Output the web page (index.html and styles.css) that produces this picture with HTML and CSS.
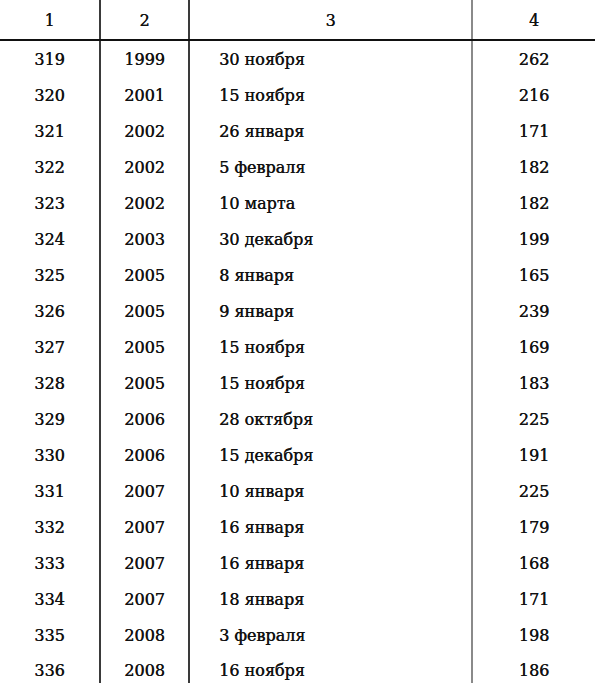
FILE: index.html
```html
<!DOCTYPE html>
<html lang="ru">
<head>
<meta charset="utf-8">
<title>Таблица</title>
<link rel="stylesheet" href="styles.css">
</head>
<body>
<table class="data">
  <colgroup>
    <col class="c1"><col class="c2"><col class="c3"><col class="c4">
  </colgroup>
  <thead>
    <tr><th>1</th><th>2</th><th>3</th><th>4</th></tr>
  </thead>
  <tbody>
    <tr><td>319</td><td>1999</td><td>30 ноября</td><td>262</td></tr>
    <tr><td>320</td><td>2001</td><td>15 ноября</td><td>216</td></tr>
    <tr><td>321</td><td>2002</td><td>26 января</td><td>171</td></tr>
    <tr><td>322</td><td>2002</td><td>5 февраля</td><td>182</td></tr>
    <tr><td>323</td><td>2002</td><td>10 марта</td><td>182</td></tr>
    <tr><td>324</td><td>2003</td><td>30 декабря</td><td>199</td></tr>
    <tr><td>325</td><td>2005</td><td>8 января</td><td>165</td></tr>
    <tr><td>326</td><td>2005</td><td>9 января</td><td>239</td></tr>
    <tr><td>327</td><td>2005</td><td>15 ноября</td><td>169</td></tr>
    <tr><td>328</td><td>2005</td><td>15 ноября</td><td>183</td></tr>
    <tr><td>329</td><td>2006</td><td>28 октября</td><td>225</td></tr>
    <tr><td>330</td><td>2006</td><td>15 декабря</td><td>191</td></tr>
    <tr><td>331</td><td>2007</td><td>10 января</td><td>225</td></tr>
    <tr><td>332</td><td>2007</td><td>16 января</td><td>179</td></tr>
    <tr><td>333</td><td>2007</td><td>16 января</td><td>168</td></tr>
    <tr><td>334</td><td>2007</td><td>18 января</td><td>171</td></tr>
    <tr><td>335</td><td>2008</td><td>3 февраля</td><td>198</td></tr>
    <tr class="last"><td>336</td><td>2008</td><td>16 ноября</td><td>186</td></tr>
  </tbody>
</table>
</body>
</html>
```
FILE: styles.css
```css
html, body {
  margin: 0;
  padding: 0;
  background: #fff;
  overflow: hidden;
}
body {
  width: 595px;
  height: 687px;
}
.data {
  width: 595px;
  border-collapse: collapse;
  table-layout: fixed;
  font-family: "DejaVu Serif", "Liberation Serif", serif;
  color: #111;
  text-shadow: 0.4px 0 0 #222;
}
.c1 { width: 100px; }
.c2 { width: 89px; }
.c3 { width: 283px; }
.c4 { width: 123px; }

.data th {
  height: 37px;
  padding: 2px 0 0;
  font-weight: normal;
  font-size: 16px;
  text-align: center;
  border-bottom: 2px solid #111;
  vertical-align: middle;
}
.data td {
  height: 36px;
  padding: 0;
  font-size: 16px;
  text-align: center;
  vertical-align: middle;
}
.data th:nth-child(1), .data td:nth-child(1),
.data th:nth-child(2), .data td:nth-child(2) {
  border-right: 2px solid #3a3a3a;
}
.data th:nth-child(3), .data td:nth-child(3) {
  border-right: 2px solid #8a8a8a;
}
.data td:nth-child(3) {
  text-align: left;
  padding-left: 29px;
}
.data tr.last td {
  height: 22px;
  vertical-align: top;
  padding: 8px 0 0;
}
.data tr.last td:nth-child(3) {
  padding-left: 29px;
}
```
